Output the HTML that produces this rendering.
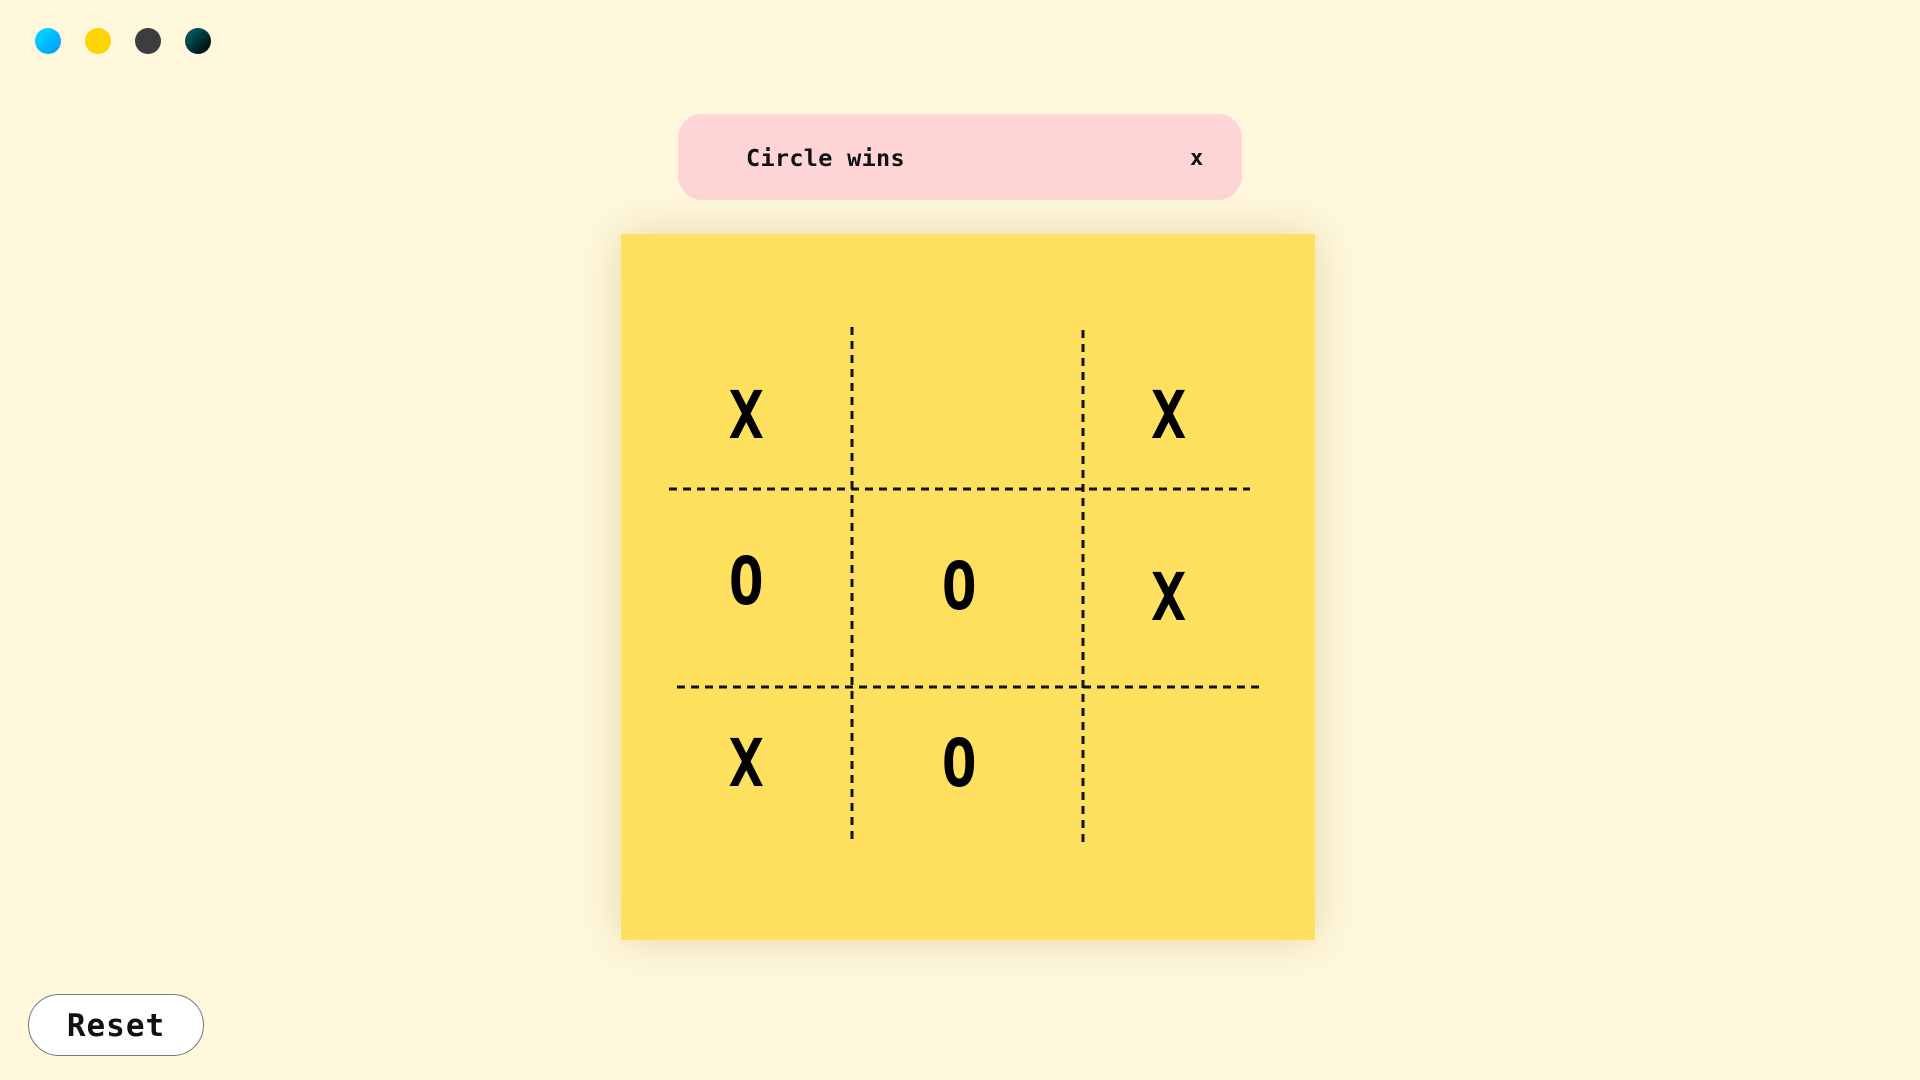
<!DOCTYPE html>
<html><head><meta charset="utf-8"><style>
html,body{margin:0;padding:0;width:1920px;height:1080px;overflow:hidden;background:#FFF8DC;font-family:"DejaVu Sans Mono","Liberation Mono",monospace}
.dot{position:absolute;top:28px;width:26px;height:26px;border-radius:50%}
.banner{position:absolute;left:678px;top:114px;width:564px;height:86px;background:#FFD5D5;border-radius:24px}
.banner .t{position:absolute;left:68px;top:30px;font-size:23.5px;font-weight:bold;color:#111;letter-spacing:0.3px}
.banner .x{position:absolute;left:512px;top:32px;font-size:22px;font-weight:bold;color:#111}
.board{position:absolute;left:621px;top:234px;width:694px;height:706px;background:#FFE15F;box-shadow:0 0 40px rgba(160,140,60,0.3)}
.reset{position:absolute;left:28px;top:994px;width:174px;height:60px;border:1px solid #777;border-radius:31px;background:#fff;font-size:31px;font-weight:bold;text-align:center;line-height:62px;color:#111;letter-spacing:1px}
</style></head><body>
<div class="dot" style="left:35px;background:linear-gradient(135deg,#00E0FF,#0096FF)"></div>
<div class="dot" style="left:85px;background:#FFD400"></div>
<div class="dot" style="left:135px;background:#3d3d3d"></div>
<div class="dot" style="left:185px;background:linear-gradient(135deg,#006A70,#000)"></div>
<div class="banner"><span class="t">Circle wins</span><span class="x">x</span></div>
<div class="board"></div>
<svg style="position:absolute;left:0;top:0" width="1920" height="1080">
<g stroke="#111" stroke-width="3" stroke-dasharray="8 6">
<line x1="852" y1="327" x2="852" y2="842"/>
<line x1="1083" y1="330" x2="1083" y2="845"/>
<line x1="669" y1="489" x2="1250" y2="489"/>
<line x1="677" y1="687" x2="1259" y2="687"/>
</g>
<g font-family="DejaVu Sans Mono, Liberation Mono, monospace" font-weight="bold" font-size="66" fill="#000" text-anchor="middle" transform="scale(0.88,1)">
<text x="848" y="438">X</text>
<text x="1328" y="438">X</text>
<text x="848" y="604">O</text>
<text x="1090" y="609">O</text>
<text x="1328" y="620">X</text>
<text x="848" y="786">X</text>
<text x="1090" y="786">O</text>
</g>
</svg>
<div class="reset">Reset</div>
</body></html>
